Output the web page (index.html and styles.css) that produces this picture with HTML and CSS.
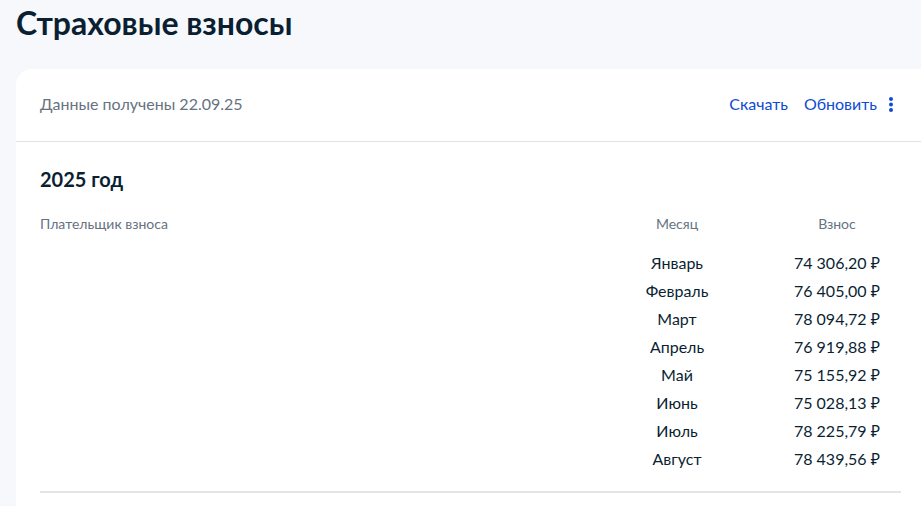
FILE: index.html
```html
<!DOCTYPE html>
<html lang="ru">
<head>
<meta charset="utf-8">
<title>Страховые взносы</title>
<link rel="stylesheet" href="styles.css">
</head>
<body>
<div class="page">
  <h1 class="title">Страховые взносы</h1>
  <section class="card">
    <header class="card-head">
      <span class="received">Данные получены 22.09.25</span>
      <div class="actions">
        <a class="link" href="#">Скачать</a>
        <a class="link" href="#">Обновить</a>
        <svg class="kebab" width="4" height="15" viewBox="0 0 4 15" aria-hidden="true">
          <circle cx="2" cy="2" r="2" fill="#0d4cd3"/>
          <circle cx="2" cy="7.5" r="2" fill="#0d4cd3"/>
          <circle cx="2" cy="13" r="2" fill="#0d4cd3"/>
        </svg>
      </div>
    </header>
    <div class="card-body">
      <h2 class="year">2025 год</h2>
      <div class="table">
        <div class="th th-payer">Плательщик взноса</div>
        <div class="th th-center">Месяц</div>
        <div class="th th-center">Взнос</div>
        <div class="payer"></div>
        <div class="col-month">
          <div class="cell">Январь</div>
          <div class="cell">Февраль</div>
          <div class="cell">Март</div>
          <div class="cell">Апрель</div>
          <div class="cell">Май</div>
          <div class="cell">Июнь</div>
          <div class="cell">Июль</div>
          <div class="cell">Август</div>
        </div>
        <div class="col-sum">
          <div class="cell">74 306,20 ₽</div>
          <div class="cell">76 405,00 ₽</div>
          <div class="cell">78 094,72 ₽</div>
          <div class="cell">76 919,88 ₽</div>
          <div class="cell">75 155,92 ₽</div>
          <div class="cell">75 028,13 ₽</div>
          <div class="cell">78 225,79 ₽</div>
          <div class="cell">78 439,56 ₽</div>
        </div>
      </div>
      <div class="divider"></div>
    </div>
  </section>
</div>
</body>
</html>
```

FILE: styles.css
```css
html, body {
  margin: 0;
  padding: 0;
}
body {
  background: #f7f8fc;
  font-family: Lato, "Noto Sans", sans-serif;
  color: #0b1f33;
  overflow: hidden;
  width: 921px;
  height: 506px;
}
.page {
  padding: 0 0 0 16px;
}
.title {
  margin: 0;
  padding-top: 3px;
  font-size: 32px;
  line-height: 40px;
  font-weight: 700;
  color: #0b1f33;
  height: 66px;
}
.card {
  background: #fff;
  border-radius: 16px 0 0 0;
  width: 909px;
  height: 460px;
}
.card-head {
  display: flex;
  align-items: center;
  justify-content: space-between;
  height: 73px;
  padding: 0 24px 2px 24px;
  box-sizing: border-box;
  border-bottom: 1px solid #e1e1e1;
}
.received {
  font-size: 16px;
  line-height: 24px;
  color: #66727f;
}
.actions {
  display: flex;
  align-items: center;
  gap: 16px;
  padding-right: 8px;
}
.link {
  color: #0d4cd3;
  text-decoration: none;
  font-size: 16px;
  line-height: 24px;
}
.kebab {
  margin-left: -4px;
  display: block;
}
.card-body {
  padding: 23px 24px 0 24px;
}
.year {
  margin: 0;
  font-size: 20px;
  line-height: 28px;
  font-weight: 700;
}
.table {
  display: grid;
  grid-template-columns: 1fr 128px 128px;
  column-gap: 32px;
  margin-top: 21px;
}
.th {
  font-size: 14px;
  line-height: 20px;
  color: #66727f;
  margin-bottom: 15px;
}
.th-center {
  text-align: center;
}
.cell {
  font-size: 16px;
  line-height: 28px;
  text-align: center;
}
.divider {
  margin-top: 18px;
  height: 2px;
  background: #e4e5e8;
}
```
